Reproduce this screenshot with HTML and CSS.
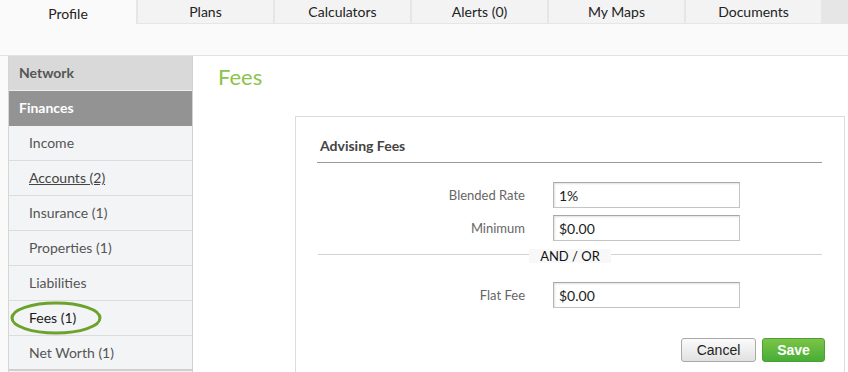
FILE: index.html
```html
<!DOCTYPE html>
<html>
	<head>
		<meta charset="utf-8">
		<title>Fees</title>
		<link rel="stylesheet" href="styles.css">
	</head>
	<body>
		<nav class="tabs">
			<a class="tab active">Profile</a>
			<a class="tab">Plans</a>
			<a class="tab">Calculators</a>
			<a class="tab">Alerts (0)</a>
			<a class="tab">My Maps</a>
			<a class="tab">Documents</a>
		</nav>
		<div class="layout">
			<aside class="sidebar">
				<div class="side-head">Network</div>
				<div class="side-head open">Finances</div>
				<ul class="side-list">
					<li>Income</li>
					<li><a class="link">Accounts (2)</a></li>
					<li>Insurance (1)</li>
					<li>Properties (1)</li>
					<li>Liabilities</li>
					<li class="current">Fees (1)
						<svg class="circle" width="96" height="36" viewBox="0 0 96 36">
							<ellipse cx="47" cy="17" rx="44" ry="15" fill="none" stroke="#6ea22f" stroke-width="3"/>
						</svg>
					</li>
					<li>Net Worth (1)</li>
				</ul>
			</aside>
			<main class="main">
				<h1 class="page-title">Fees</h1>
				<section class="card">
					<h2 class="card-title">Advising Fees</h2>
					<div class="form-grid first">
						<label>Blended Rate</label>
						<input type="text" value="1%">
						<label>Minimum</label>
						<input type="text" value="$0.00">
					</div>
					<div class="divider"><span>AND / OR</span></div>
					<div class="form-grid">
						<label>Flat Fee</label>
						<input type="text" value="$0.00">
					</div>
					<div class="actions">
						<button class="btn cancel">Cancel</button>
						<button class="btn save">Save</button>
					</div>
				</section>
			</main>
		</div>
	</body>
</html>
```

FILE: styles.css
```css
* {
	margin: 0;
	padding: 0;
	box-sizing: border-box;
}
body {
	font-family: "Lato", "Noto Sans", sans-serif;
	font-size: 14px;
	background: #fafafa;
	color: #222;
	overflow: hidden;
}
.tabs {
	display: flex;
	gap: 2px;
	height: 24px;
	background: #e6e6e6;
}
.tab {
	width: 135px;
	height: 23px;
	background: #f3f3f3;
	text-align: center;
	line-height: 23px;
	color: #222;
}
.tab.active {
	width: 136px;
	height: 31px;
	line-height: 28px;
	background: #fafafa;
}
.layout {
	display: flex;
	margin-top: 31px;
	padding-left: 8px;
	border-top: 1px solid #e2e2e2;
	height: 400px;
}
.sidebar {
	width: 185px;
	border-left: 1px solid #d6d6d6;
	border-right: 1px solid #d0d0d0;
	background: #f3f4f6;
}
.side-head {
	height: 35px;
	line-height: 34px;
	padding-left: 10px;
	font-weight: bold;
	color: #555;
	background: #d9d9d9;
	border-bottom: 1px solid #eeeeee;
}
.side-head.open {
	background: #939393;
	color: #fff;
	border-bottom: none;
}
.side-list {
	list-style: none;
}
.side-list li {
	position: relative;
	height: 35px;
	line-height: 34px;
	padding-left: 20px;
	color: #555;
	border-bottom: 1px solid #dcdcdc;
}
.side-list li:last-child {
	border-bottom: 2px solid #d0d0d0;
}
.side-list .link {
	color: #444;
	text-decoration: underline;
}
.side-list .current {
	color: #1a1a1a;
}
.circle {
	position: absolute;
	left: 0;
	top: 0;
}
.main {
	flex: 1;
	background: #fff;
	padding: 8px 3px 0 25px;
}
.page-title {
	font-size: 22px;
	font-weight: normal;
	line-height: 26px;
	color: #8cc34a;
}
.card {
	margin: 26px 0 0 77px;
	border: 1px solid #dcdcdc;
	border-bottom: none;
	height: 300px;
	padding: 0 22px 0 21px;
}
.card-title {
	font-size: 14px;
	font-weight: bold;
	color: #444;
	padding: 19px 0 6px 3px;
	line-height: 20px;
	border-bottom: 1px solid #999;
}
.form-grid {
	display: grid;
	grid-template-columns: 208px 187px;
	column-gap: 28px;
	row-gap: 7px;
	align-items: center;
}
.form-grid.first {
	margin-top: 19px;
}
.form-grid label {
	text-align: right;
	font-size: 13px;
	color: #666;
}
.form-grid input {
	height: 26px;
	padding: 0 5px;
	font-family: "Lato", sans-serif;
	font-size: 14px;
	color: #222;
	border: 1px solid #c4c4c4;
	border-top-color: #a8a8a8;
	border-left-color: #b4b4b4;
	box-shadow: inset 1px 1px 2px rgba(0, 0, 0, 0.12);
	outline: none;
}
.divider {
	position: relative;
	height: 14px;
	margin: 6px 0 21px 1px;
	text-align: center;
}
.divider::before {
	content: "";
	position: absolute;
	left: 0;
	right: 0;
	top: 7px;
	border-top: 1px solid #d2d2d2;
}
.divider span {
	position: relative;
	display: inline-block;
	padding: 0 11px;
	background: #f8f8f8;
	font-size: 13px;
	line-height: 14px;
	color: #111;
}
.actions {
	display: flex;
	justify-content: flex-end;
	gap: 6px;
	margin: 30px -3px 0 0;
}
.btn {
	height: 24px;
	border-radius: 3px;
	font-family: "Liberation Sans", Arial, sans-serif;
	font-size: 14px;
}
.cancel {
	width: 75px;
	background: linear-gradient(#fbfbfb, #e1e1e1);
	border: 1px solid #a9a9a9;
	color: #222;
}
.save {
	width: 63px;
	background: linear-gradient(#7cc446, #47ad37);
	border: 1px solid #4c9f35;
	color: #fff;
	font-weight: bold;
}
```
